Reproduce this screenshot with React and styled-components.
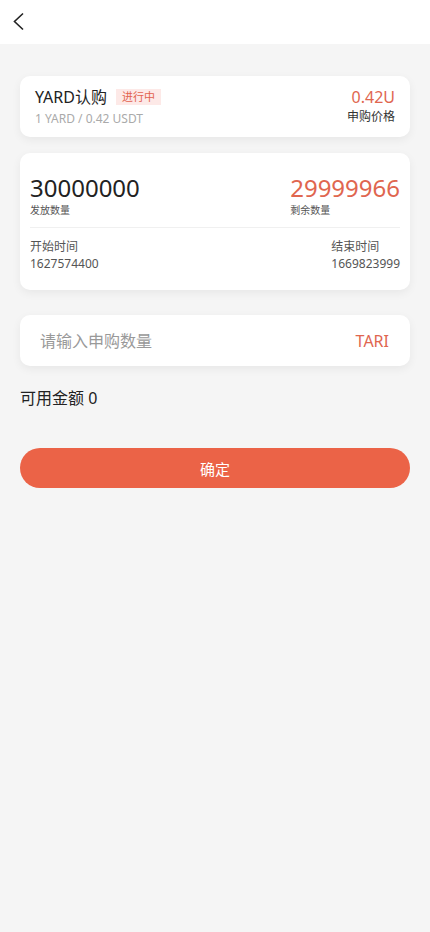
import styled, { createGlobalStyle } from 'styled-components';

const GlobalStyle = createGlobalStyle`
  html, body {
    margin: 0;
    padding: 0;
    background: #f5f5f5;
  }
  body {
    font-family: 'Noto Sans', 'Noto Sans CJK SC', sans-serif;
    color: #333;
  }
`;

const Page = styled.div`
  min-height: 932px;
  background: #f5f5f5;
`;

const Header = styled.div`
  align-items: center;
  background: #fff;
  display: flex;
  height: 44px;
  padding-left: 12px;
`;

const BackButton = styled.button`
  background: transparent;
  border: 0;
  display: flex;
  padding: 0;
`;

const Body = styled.div`
  display: flex;
  flex-direction: column;
  padding: 32px 20px 0;
`;

const Card = styled.div`
  background: #fff;
  border-radius: 10px;
  box-shadow: 0 3px 10px rgba(0, 0, 0, 0.06);
  margin-bottom: ${p => p.gap || 0}px;
`;

const SummaryCard = styled(Card)`
  align-items: center;
  display: flex;
  height: 61px;
  justify-content: space-between;
  padding: 0 15px;
  box-sizing: border-box;
`;

const TitleRow = styled.div`
  align-items: center;
  display: flex;
  gap: 9px;
`;

const Title = styled.div`
  color: #222;
  font-size: 16px;
  line-height: 22px;
`;

const Badge = styled.span`
  background: #fde9e7;
  color: #e2624f;
  font-size: 11px;
  line-height: 16px;
  padding: 0 6px;
`;

const Sub = styled.div`
  color: #aaa;
  font-size: 12px;
  line-height: 16px;
  margin-top: 3px;
`;

const PriceBox = styled.div`
  display: flex;
  flex-direction: column;
  align-items: flex-end;
  gap: 1px;
`;

const Price = styled.div`
  color: #e0664f;
  font-size: 16px;
  line-height: 19px;
`;

const Label = styled.div`
  color: ${p => p.muted ? '#555' : '#333'};
  font-size: ${p => p.size || 12}px;
  line-height: ${p => (p.size || 12) + 5}px;
`;

const StatsCard = styled(Card)`
  box-sizing: border-box;
  height: 137px;
  padding: 20px 10px 0;
`;

const StatsRow = styled.div`
  display: flex;
  justify-content: space-between;
  padding-bottom: ${p => p.pad || 0}px;
  border-bottom: ${p => p.divided ? '1px solid #f0f0f0' : 0};
  margin-top: ${p => p.divided ? 0 : 10}px;
`;

const Stat = styled.div`
  display: flex;
  flex-direction: column;
  align-items: flex-start;
`;

const BigNumber = styled.div`
  color: ${p => p.red ? '#e0664f' : '#222'};
  font-size: 24px;
  line-height: 30px;
`;

const InputCard = styled(Card)`
  align-items: center;
  display: flex;
  height: 51px;
  justify-content: space-between;
  padding: 0 21px 0 20px;
  box-sizing: border-box;
`;

const AmountInput = styled.input`
  background: transparent;
  border: 0;
  color: #333;
  flex: 1;
  font-family: inherit;
  font-size: 16px;
  outline: 0;
  padding: 0;
  &::placeholder {
    color: #999;
  }
`;

const Unit = styled.span`
  color: #e0664f;
  font-size: 16px;
`;

const Balance = styled.div`
  color: #222;
  font-size: 16px;
  line-height: 22px;
  margin-top: 21px;
`;

const ConfirmButton = styled.button`
  background: #eb6347;
  border: 0;
  border-radius: 20px;
  color: #fff;
  font-family: inherit;
  font-size: 15px;
  height: 40px;
  margin-top: 39px;
  width: 100%;
`;

function App() {
  return (
    <Page>
      <GlobalStyle />
      <Header>
        <BackButton>
          <svg width="14" height="20" viewBox="0 0 14 20">
            <path d="M11 1.5 L2.5 9.5 L11 17.5" fill="none" stroke="#222" strokeWidth="1.6" />
          </svg>
        </BackButton>
      </Header>
      <Body>
        <SummaryCard gap={16}>
          <div>
            <TitleRow>
              <Title>YARD认购</Title>
              <Badge>进行中</Badge>
            </TitleRow>
            <Sub>1 YARD / 0.42 USDT</Sub>
          </div>
          <PriceBox>
            <Price>0.42U</Price>
            <Label>申购价格</Label>
          </PriceBox>
        </SummaryCard>

        <StatsCard gap={25}>
          <StatsRow divided pad={9}>
            <Stat>
              <BigNumber>30000000</BigNumber>
              <Label size={10} muted>发放数量</Label>
            </Stat>
            <Stat>
              <BigNumber red>29999966</BigNumber>
              <Label size={10} muted>剩余数量</Label>
            </Stat>
          </StatsRow>
          <StatsRow>
            <Stat>
              <Label muted>开始时间</Label>
              <Label muted>1627574400</Label>
            </Stat>
            <Stat>
              <Label muted>结束时间</Label>
              <Label muted>1669823999</Label>
            </Stat>
          </StatsRow>
        </StatsCard>

        <InputCard>
          <AmountInput type="text" placeholder="请输入申购数量" />
          <Unit>TARI</Unit>
        </InputCard>

        <Balance>可用金额 0</Balance>

        <ConfirmButton>确定</ConfirmButton>
      </Body>
    </Page>
  );
}

export default App;
